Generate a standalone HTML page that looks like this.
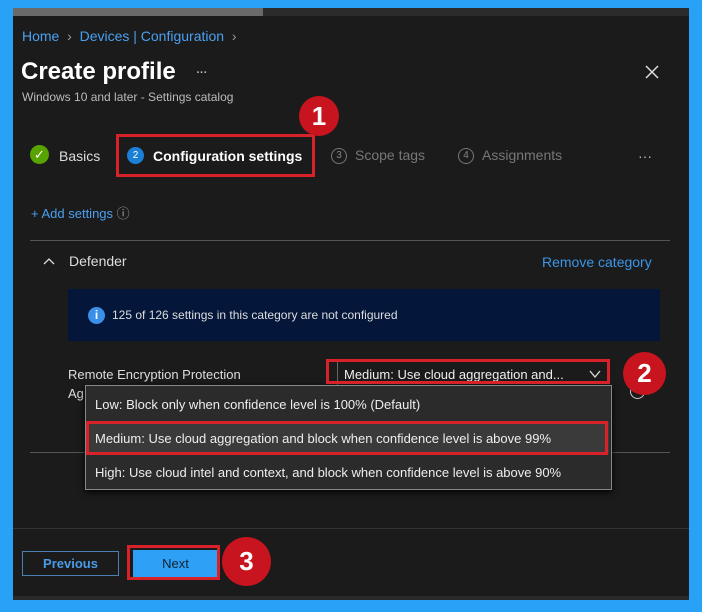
<!DOCTYPE html>
<html><head><meta charset="utf-8"><style>
*{margin:0;padding:0;box-sizing:border-box}
body{width:702px;height:612px;background:#27a2f7;position:relative;overflow:hidden;font-family:"Liberation Sans",sans-serif;}
.panel{position:absolute;left:13px;top:8px;width:676px;height:592px;background:#1b1b1b;overflow:hidden}
.a{position:absolute;white-space:nowrap}
.red{position:absolute;border:3px solid #d7222a}
.badge{position:absolute;width:40px;height:40px;border-radius:50%;background:#c8141e;color:#fff;font-weight:bold;font-size:26px;text-align:center;line-height:40px}
.circ{display:inline-block;width:16px;height:16px;border:1px solid #777;border-radius:50%;font-size:10px;text-align:center;line-height:14px;color:#888;vertical-align:middle;margin-right:8px}
</style></head><body>
<div class="panel">
 <div class="a" style="left:0;top:0;width:250px;height:8px;background:#6a6a6a"></div>
 <div class="a" style="left:250px;top:0;width:426px;height:8px;background:#2b2b2b"></div>
 <div class="a" style="left:9px;top:20px;font-size:14px;color:#4aa0f0">Home <span style="color:#999">&nbsp;›&nbsp;</span> Devices | Configuration <span style="color:#999">&nbsp;›</span></div>
 <div class="a" style="left:8px;top:50px;font-size:24px;color:#fff;font-weight:600">Create profile <span style="font-size:11px;color:#bbb;margin-left:14px;vertical-align:middle">···</span></div>
 <div class="a" style="left:9px;top:82px;font-size:12px;color:#bbb">Windows 10 and later - Settings catalog</div>
 <svg class="a" style="left:632px;top:57px" width="14" height="14"><path d="M1 1L13 13M13 1L1 13" stroke="#ddd" stroke-width="1.5"/></svg>
 <div class="a" style="left:17px;top:137px;width:19px;height:19px;border-radius:50%;background:#57a300;color:#fff;font-size:13px;text-align:center;line-height:19px">✓</div>
 <div class="a" style="left:46px;top:140px;font-size:14px;color:#ddd">Basics</div>
 <div class="a" style="left:114px;top:139px;width:17px;height:17px;border-radius:50%;background:#1b7fd6;color:#fff;font-size:10px;text-align:center;line-height:17px">2</div>
 <div class="a" style="left:140px;top:140px;font-size:14px;color:#fff;font-weight:bold">Configuration settings</div>
 <div class="a" style="left:318px;top:139px;font-size:14px;color:#777"><span class="circ">3</span>Scope tags</div>
 <div class="a" style="left:445px;top:139px;font-size:14px;color:#777"><span class="circ">4</span>Assignments</div>
 <div class="a" style="left:625px;top:140px;font-size:14px;color:#bbb">···</div>
 <div class="a" style="left:18px;top:195px;font-size:13px;color:#4aa0f0">+ Add settings <span style="color:#aaa">ⓘ</span></div>
 <div class="a" style="left:17px;top:232px;width:640px;height:1px;background:#555"></div>
 <svg class="a" style="left:30px;top:249px" width="12" height="8"><path d="M1 7L6 2L11 7" stroke="#ddd" stroke-width="1.3" fill="none"/></svg>
 <div class="a" style="left:56px;top:245px;font-size:14px;color:#ddd">Defender</div>
 <div class="a" style="left:529px;top:246px;font-size:14px;color:#3a95e8">Remove category</div>
 <div class="a" style="left:55px;top:281px;width:592px;height:52px;background:#04163a"></div>
 <div class="a" style="left:75px;top:299px;width:17px;height:17px;border-radius:50%;background:#3a8fe8;color:#fff;font-size:12px;font-weight:bold;text-align:center;line-height:17px">i</div>
 <div class="a" style="left:99px;top:300px;font-size:12px;color:#ddd">125 of 126 settings in this category are not configured</div>
 <div class="a" style="left:55px;top:359px;font-size:13px;color:#ddd">Remote Encryption Protection</div>
 <div class="a" style="left:55px;top:378px;font-size:13px;color:#ddd">Ag</div>
 <div class="a" style="left:324px;top:353px;width:270px;height:28px;background:#1b1b1b;border-left:1px solid #666"></div>
 <div class="a" style="left:331px;top:359px;font-size:13px;color:#eee">Medium: Use cloud aggregation and...</div>
 <svg class="a" style="left:576px;top:362px" width="12" height="8"><path d="M1 1L6 7L11 1" stroke="#ddd" stroke-width="1.3" fill="none"/></svg>
 <div class="a" style="left:617px;top:376px;width:15px;height:15px;border:1px solid #ccc;border-radius:50%"></div>
 <div class="a" style="left:17px;top:444px;width:640px;height:1px;background:#555"></div>
 <div class="a" style="left:72px;top:377px;width:527px;height:105px;background:#2b2b2b;border:1px solid #888;box-shadow:0 2px 6px #000"></div>
 <div class="a" style="left:82px;top:389px;font-size:13px;color:#eee">Low: Block only when confidence level is 100% (Default)</div>
 <div class="a" style="left:75px;top:414px;width:521px;height:32px;background:#3a3a3a"></div>
 <div class="a" style="left:82px;top:423px;font-size:13px;color:#eee">Medium: Use cloud aggregation and block when confidence level is above 99%</div>
 <div class="a" style="left:82px;top:457px;font-size:13px;color:#eee">High: Use cloud intel and context, and block when confidence level is above 90%</div>
 <div class="a" style="left:0;top:520px;width:676px;height:1px;background:#333"></div>
 <div class="a" style="left:9px;top:543px;width:97px;height:25px;border:1px solid #4a7fb0;color:#4a9ae6;font-size:13px;font-weight:bold;text-align:center;line-height:23px">Previous</div>
 <div class="a" style="left:120px;top:542px;width:85px;height:27px;background:#2ea0f5;color:#123;font-size:13px;text-align:center;line-height:27px">Next</div>
 <div class="a" style="left:0;top:588px;width:676px;height:4px;background:#2a2a2a"></div>
</div>
<div class="red" style="left:116px;top:134px;width:199px;height:43px"></div>
<div class="badge" style="left:299px;top:96px">1</div>
<div class="red" style="left:326px;top:359px;width:284px;height:25px"></div>
<div class="badge" style="left:623px;top:352px;width:43px;height:43px;line-height:43px">2</div>
<div class="red" style="left:86px;top:421px;width:522px;height:34px"></div>
<div class="red" style="left:127px;top:545px;width:93px;height:35px"></div>
<div class="badge" style="left:222px;top:537px;width:49px;height:49px;line-height:49px">3</div>
</body></html>
